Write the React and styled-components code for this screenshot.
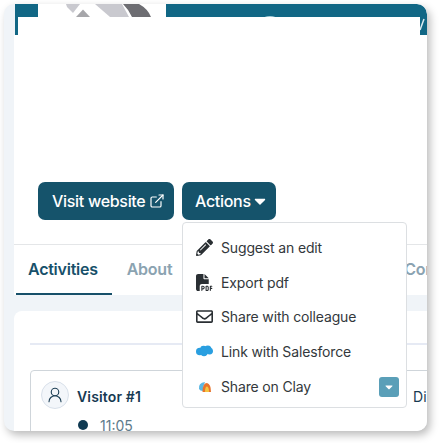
import React from "react";
import styled, { createGlobalStyle } from "styled-components";
import { ExternalLink, UserRound } from "lucide-react";
import { FaCaretDown, FaPencilAlt, FaRegEnvelope } from "react-icons/fa";
import { FaFilePdf } from "react-icons/fa6";

const Global = createGlobalStyle`
    html, body { margin: 0; padding: 0; background: #fff; }
    body { font-family: Inter, "Liberation Sans", sans-serif; }
`;
const Page = styled.div`
    padding: 4px 12px 12px 4px;
    width: 423px;
`;
const Card = styled.div`
    width: 423px;
    height: 427px;
    background: #f0f4f8;
    border-radius: 10px;
    overflow: hidden;
    box-shadow: 3px 4px 9px rgba(0, 0, 0, 0.27);
`;
const Banner = styled.div`
    display: flex;
    height: 31px;
    margin-left: 11px;
    background: #116785;
    border-top-right-radius: 10px;
    overflow: hidden;
`;
const BannerStart = styled.div`
    width: 23px;
`;
const LogoBox = styled.div`
    width: 128px;
    background: #fff;
`;
const BannerArt = styled.svg`
    flex: 1;
    height: 31px;
`;
const Sheet = styled.div`
    height: 18px;
    margin: -18px 7px 0 14px;
    background: #fff;
    position: relative;
`;
const Main = styled.div`
    margin-left: 10px;
    background: #fff;
    padding-top: 147px;
`;
const Actions = styled.div`
    display: flex;
    gap: 8px;
    padding-left: 24px;
`;
const Button = styled.div`
    height: 38px;
    box-sizing: border-box;
    display: flex;
    align-items: center;
    gap: ${(p) => p.$gap}px;
    width: ${(p) => p.$width}px;
    padding-left: ${(p) => p.$pad}px;
    background: #15536b;
    color: #fff;
    font-size: 16px;
    font-weight: 500;
    letter-spacing: -0.3px;
    border-radius: 7px;
`;
const MenuAnchor = styled.div`
    position: relative;
`;
const Menu = styled.div`
    position: absolute;
    z-index: 2;
    top: 40px;
    left: 0;
    width: 225px;
    height: 186px;
    box-sizing: border-box;
    padding-top: 7px;
    background: #fff;
    border: 1px solid #dcdfe2;
    border-radius: 4px;
`;
const MenuItem = styled.div`
    display: flex;
    align-items: center;
    height: 34.8px;
    padding-left: 13px;
    gap: 8px;
    color: #33383c;
    font-size: 14px;
    letter-spacing: -0.15px;
`;
const MenuIcon = styled.span`
    display: flex;
    justify-content: center;
    width: 17px;
    color: #2a2f33;
    font-size: 17px;
`;
const Expand = styled.div`
    width: 20px;
    height: 20px;
    margin-left: auto;
    margin-right: 7px;
    display: flex;
    align-items: center;
    justify-content: center;
    background: #5a9fb8;
    color: #fff;
    font-size: 12px;
    border-radius: 3px;
`;
const Tabs = styled.div`
    display: flex;
    gap: 3px;
    margin-top: 24px;
    height: 51px;
    box-sizing: border-box;
    border-top: 1px solid #e4e6e8;
    padding-left: 2px;
    overflow: hidden;
`;
const Tab = styled.div`
    display: flex;
    align-items: center;
    padding: 0 14px 0 12px;
    margin-left: ${(p) => p.$offset || 0}px;
    height: 50px;
    box-sizing: border-box;
    font-size: 16px;
    font-weight: 600;
    letter-spacing: -0.25px;
    color: ${(p) => (p.$active ? "#17506a" : "#8ba3b1")};
    border-bottom: 2px solid ${(p) => (p.$active ? "#17506a" : "transparent")};
`;
const Feed = styled.div`
    margin: 16px 0 0 10px;
    height: 130px;
    background: #fff;
    border-top-left-radius: 8px;
    padding: 32px 0 0 16px;
    overflow: hidden;
`;
const Divider = styled.div`
    height: 2px;
    background: #e6eaf4;
`;
const Visit = styled.div`
    margin-top: 25px;
    width: 460px;
    height: 90px;
    box-sizing: border-box;
    padding: 10px 10px;
    border: 1px solid #cfd5da;
    border-radius: 4px;
`;
const VisitHead = styled.div`
    display: flex;
    align-items: center;
    gap: 8px;
    height: 28px;
    color: #173a52;
    font-size: 14px;
    font-weight: 600;
    letter-spacing: 0.15px;
`;
const Avatar = styled.div`
    width: 28px;
    height: 28px;
    box-sizing: border-box;
    border: 1px solid #d8e0ea;
    border-radius: 50%;
    background: #f3f6fa;
    color: #1d3f55;
    display: flex;
    align-items: center;
    justify-content: center;
`;
const VisitorName = styled.span`
    margin-top: 2px;
`;
const Source = styled.span`
    margin: 2px 0 0 264px;
    font-weight: 400;
`;
const Time = styled.div`
    display: flex;
    align-items: center;
    gap: 12px;
    margin: 8px 0 0 37px;
    color: #5e7b8c;
    font-size: 14px;
`;
const Dot = styled.span`
    width: 10px;
    height: 10px;
    margin-bottom: 2px;
    border-radius: 50%;
    background: #0f3a52;
`;

const Logo = () => (
    <svg width="128" height="31" viewBox="38 4 128 31">
        <polygon points="66,4 80,4 73,13 67,7" fill="#c9c9cf" />
        <polygon points="76,17 83,9.5 90,17" fill="#a6a6aa" />
        <polygon points="95,4 122,4 129,17 110,17" fill="#c9c9cf" />
        <path d="M123 4 L139 4 Q148 9 151 17 L132 17 Q129 10 123 4 Z" fill="#6d6d72" />
    </svg>
);

const SalesforceIcon = () => (
    <svg width="18" height="14" viewBox="0 0 18 14">
        <g fill="#2a9fe0">
            <circle cx="4" cy="6.5" r="4" />
            <circle cx="8" cy="4" r="3.6" />
            <circle cx="12.5" cy="4" r="3.8" />
            <circle cx="14.4" cy="6" r="3.6" />
            <circle cx="8.5" cy="7" r="4.4" />
        </g>
    </svg>
);

const ClayIcon = () => (
    <svg width="14" height="12" viewBox="0 0 14 12">
        <path d="M1 8 Q0 2 7 1 Q5 5 5 10 Q2 10 1 8 Z" fill="#5cb8e4" />
        <path d="M4.5 11 Q4.5 2 9 2 Q13 3 13 11 Z" fill="#e8742c" />
        <path d="M7 11 Q7 5.5 9 5.5 Q11 6 11 11 Z" fill="#f4c542" />
    </svg>
);

export default function App() {
    return (
        <>
            <Global />
            <Page>
                <Card>
                    <Banner>
                        <BannerStart />
                        <LogoBox>
                            <Logo />
                        </LogoBox>
                        <BannerArt viewBox="0 0 261 31" preserveAspectRatio="none">
                            <circle cx="104" cy="26" r="14" fill="#a9d0dc" />
                            <path d="M254 26 L258 15" stroke="#dcecf2" strokeWidth="1.5" />
                        </BannerArt>
                    </Banner>
                    <Sheet />
                    <Main>
                        <Actions>
                            <Button $width={136} $gap={4} $pad={14}>
                                Visit website <ExternalLink size={16} strokeWidth={1.8} />
                            </Button>
                            <MenuAnchor>
                                <Button $width={94} $gap={0} $pad={13}>
                                    Actions <FaCaretDown size={18} />
                                </Button>
                                <Menu>
                                    <MenuItem>
                                        <MenuIcon><FaPencilAlt /></MenuIcon>
                                        Suggest an edit
                                    </MenuItem>
                                    <MenuItem>
                                        <MenuIcon><FaFilePdf /></MenuIcon>
                                        Export pdf
                                    </MenuItem>
                                    <MenuItem>
                                        <MenuIcon><FaRegEnvelope /></MenuIcon>
                                        Share with colleague
                                    </MenuItem>
                                    <MenuItem>
                                        <MenuIcon><SalesforceIcon /></MenuIcon>
                                        Link with Salesforce
                                    </MenuItem>
                                    <MenuItem>
                                        <MenuIcon><ClayIcon /></MenuIcon>
                                        Share on Clay
                                        <Expand><FaCaretDown /></Expand>
                                    </MenuItem>
                                </Menu>
                            </MenuAnchor>
                        </Actions>
                        <Tabs>
                            <Tab $active>Activities</Tab>
                            <Tab>About</Tab>
                            <Tab $offset={203}>Contact</Tab>
                        </Tabs>
                    </Main>
                    <Feed>
                        <Divider />
                        <Visit>
                            <VisitHead>
                                <Avatar><UserRound size={18} strokeWidth={1.5} /></Avatar>
                                <VisitorName>Visitor #1</VisitorName>
                                <Source>Direct</Source>
                            </VisitHead>
                            <Time>
                                <Dot />
                                11:05
                            </Time>
                        </Visit>
                    </Feed>
                </Card>
            </Page>
        </>
    );
}
